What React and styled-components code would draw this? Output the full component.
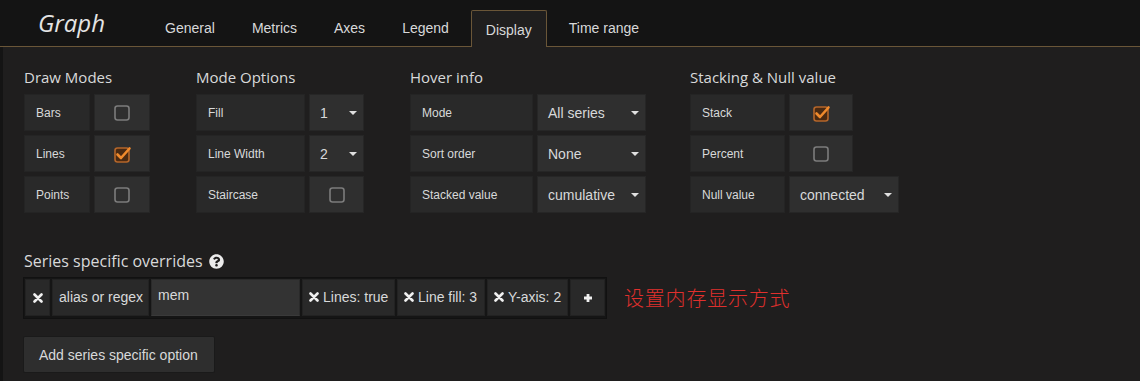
import React from 'react';
import styled, {createGlobalStyle} from 'styled-components';
import {FaQuestionCircle} from 'react-icons/fa';

const GlobalStyle = createGlobalStyle`
    html, body {
        margin: 0;
        padding: 0;
        background: #141414;
    }
    body {
        font-family: "Liberation Sans", Arial, sans-serif;
        color: #d8d9da;
    }
`

const PAGE = styled.div`
    width: 1140px;
    height: 381px;
    overflow: hidden;
    background: #141414;
`

const HEADER = styled.div`
    display: flex;
    align-items: flex-end;
    height: 46px;
    padding-left: 38px;
    border-bottom: 1px solid #6a5638;
`

const TITLE = styled.div`
    align-self: flex-start;
    margin-top: 7px;
    margin-right: 45px;
    font-family: "Open Sans", sans-serif;
    font-style: italic;
    font-size: 24px;
    line-height: 32px;
    color: #e4e4e4;
`

const TAB = styled.div`
    box-sizing: border-box;
    height: ${p => p.active ? '37px' : '36px'};
    margin-right: 7px;
    margin-bottom: ${p => p.active ? '-1px' : '0'};
    padding: ${p => p.active ? '11px 14px 0' : '10px 15px 0'};
    font-size: 14px;
    line-height: 16px;
    color: #d8d9da;
    background: ${p => p.active ? '#1f1e1e' : 'transparent'};
    border: ${p => p.active ? '1px solid #6a5638' : 'none'};
    border-bottom: none;
    border-radius: 2px 2px 0 0;
`

const PANEL = styled.div`
    height: 334px;
    margin-left: 3px;
    padding: 20px 0 0 21px;
    background: #1f1e1e;
`

const SECTIONS = styled.div`
    display: flex;
`

const SECTION = styled.div`
    display: flex;
    flex-direction: column;
    margin-right: ${p => p.gap || 0}px;
`

const HEADING = styled.div`
    font-family: "Open Sans", sans-serif;
    font-size: 15px;
    line-height: 20px;
    color: #d8d9da;
    margin-bottom: 7px;
`

const ROWS = styled.div`
    display: flex;
    flex-direction: column;
    gap: 4px;
`

const ROW = styled.div`
    display: flex;
    gap: 4px;
`

const LABEL = styled.div`
    box-sizing: border-box;
    display: flex;
    align-items: center;
    width: ${p => p.w}px;
    height: 37px;
    padding-left: 11px;
    font-size: 12px;
    color: #d8d9da;
    background: #292929;
    border: 1px solid #242424;
`

const VALUE = styled.div`
    box-sizing: border-box;
    display: flex;
    align-items: center;
    justify-content: ${p => p.center ? 'center' : 'space-between'};
    width: ${p => p.w}px;
    height: 37px;
    padding: ${p => p.center ? '0' : '0 6px 0 10px'};
    font-size: 14px;
    color: #d8d9da;
    background: #2f2f2f;
    border: 1px solid #262626;
`

const CARET = styled.span`
    width: 0;
    height: 0;
    border-left: 4px solid transparent;
    border-right: 4px solid transparent;
    border-top: 4px solid #e0e0e0;
    margin-top: 1px;
`

const OVERRIDE_HEADING = styled.div`
    display: flex;
    align-items: center;
    gap: 6px;
    margin-top: 37px;
    margin-bottom: 5px;
    font-family: "Open Sans", sans-serif;
    font-size: 16px;
    line-height: 22px;
    color: #d8d9da;
    svg {
        color: #ececec;
        width: 15px;
        height: 15px;
        margin-top: 1px;
    }
`

const OVERRIDE_LINE = styled.div`
    display: flex;
    align-items: center;
    margin-left: -1px;
`

const OVERRIDES = styled.div`
    display: flex;
    gap: 2px;
    padding: 1px 1px 2px 1px;
    background: #151515;
    border: 1px solid #111;
`

const OCELL = styled.div`
    box-sizing: border-box;
    display: flex;
    align-items: center;
    justify-content: ${p => p.center ? 'center' : 'flex-start'};
    gap: 4px;
    width: ${p => p.w}px;
    height: 37px;
    padding: ${p => p.center ? '0' : '0 0 1px 6px'};
    font-size: 14px;
    color: #d8d9da;
    background: #292929;
    border: 1px solid #222;
`

const INPUT = styled.div`
    box-sizing: border-box;
    width: 149px;
    height: 37px;
    padding: 7px 0 0 6px;
    font-size: 14px;
    color: #d8d9da;
    background: #333;
    border: 1px solid #2a2a2a;
    border-bottom-color: #3a3a3a;
`

const NOTE = styled.div`
    margin-left: 17px;
    margin-bottom: 2px;
    font-family: "Noto Sans CJK SC", sans-serif;
    font-weight: 300;
    font-size: 20px;
    letter-spacing: 0.8px;
    color: #e0302d;
`

const BUTTON = styled.div`
    box-sizing: border-box;
    display: inline-flex;
    align-items: center;
    height: 37px;
    margin-top: 17px;
    margin-left: -1px;
    padding: 0 15px;
    width: 192px;
    font-size: 14px;
    color: #d8d9da;
    background: #2e2e2e;
    border: 1px solid #1a1a1a;
    border-radius: 2px;
`

const CheckBox = ({checked}) => (
    <svg width="20" height="20" viewBox="0 0 20 20">
        {checked ? (
            <>
                <rect x="3" y="4" width="14" height="14" rx="2.5" fill="#4a2a12" stroke="#b5662a" strokeWidth="1.6"/>
                <path d="M5.5 10.5 L9 14 L17.5 4.5" fill="none" stroke="#f08a2c" strokeWidth="2.6" strokeLinecap="round" strokeLinejoin="round"/>
            </>
        ) : (
            <rect x="3" y="3" width="14" height="14" rx="2.5" fill="none" stroke="#7c7c7c" strokeWidth="1.6"/>
        )}
    </svg>
)

const Remove = () => (
    <svg width="10" height="10" viewBox="0 0 10 10">
        <path d="M1.5 1.5 L8.5 8.5 M8.5 1.5 L1.5 8.5" stroke="#f0f0f0" strokeWidth="2.6" strokeLinecap="round"/>
    </svg>
)

const Plus = () => (
    <svg width="10" height="10" viewBox="0 0 10 10">
        <path d="M5 1 V9 M1 5 H9" stroke="#f0f0f0" strokeWidth="2.8"/>
    </svg>
)

const Select = ({w, value}) => (
    <VALUE w={w}>
        <span>{value}</span>
        <CARET/>
    </VALUE>
)

const Check = ({w, checked}) => (
    <VALUE w={w} center>
        <CheckBox checked={checked}/>
    </VALUE>
)

const App = () => {
    const tabs = ['General', 'Metrics', 'Axes', 'Legend', 'Display', 'Time range'];
    return (
        <PAGE>
            <GlobalStyle/>
            <HEADER>
                <TITLE>Graph</TITLE>
                {tabs.map(t => <TAB key={t} active={t === 'Display'}>{t}</TAB>)}
            </HEADER>
            <PANEL>
                <SECTIONS>
                    <SECTION gap={46}>
                        <HEADING>Draw Modes</HEADING>
                        <ROWS>
                            <ROW><LABEL w={66}>Bars</LABEL><Check w={56}/></ROW>
                            <ROW><LABEL w={66}>Lines</LABEL><Check w={56} checked/></ROW>
                            <ROW><LABEL w={66}>Points</LABEL><Check w={56}/></ROW>
                        </ROWS>
                    </SECTION>
                    <SECTION gap={46}>
                        <HEADING>Mode Options</HEADING>
                        <ROWS>
                            <ROW><LABEL w={109}>Fill</LABEL><Select w={55} value="1"/></ROW>
                            <ROW><LABEL w={109}>Line Width</LABEL><Select w={55} value="2"/></ROW>
                            <ROW><LABEL w={109}>Staircase</LABEL><Check w={55}/></ROW>
                        </ROWS>
                    </SECTION>
                    <SECTION gap={44}>
                        <HEADING>Hover info</HEADING>
                        <ROWS>
                            <ROW><LABEL w={123}>Mode</LABEL><Select w={109} value="All series"/></ROW>
                            <ROW><LABEL w={123}>Sort order</LABEL><Select w={109} value="None"/></ROW>
                            <ROW><LABEL w={123}>Stacked value</LABEL><Select w={109} value="cumulative"/></ROW>
                        </ROWS>
                    </SECTION>
                    <SECTION>
                        <HEADING>Stacking &amp; Null value</HEADING>
                        <ROWS>
                            <ROW><LABEL w={95}>Stack</LABEL><Check w={64} checked/></ROW>
                            <ROW><LABEL w={95}>Percent</LABEL><Check w={64}/></ROW>
                            <ROW><LABEL w={95}>Null value</LABEL><Select w={110} value="connected"/></ROW>
                        </ROWS>
                    </SECTION>
                </SECTIONS>

                <OVERRIDE_HEADING>Series specific overrides <FaQuestionCircle/></OVERRIDE_HEADING>
                <OVERRIDE_LINE>
                    <OVERRIDES>
                        <OCELL w={25} center><Remove/></OCELL>
                        <OCELL w={97}>alias or regex</OCELL>
                        <INPUT>mem</INPUT>
                        <OCELL w={93}><Remove/>Lines: true</OCELL>
                        <OCELL w={88}><Remove/>Line fill: 3</OCELL>
                        <OCELL w={81}><Remove/>Y-axis: 2</OCELL>
                        <OCELL w={35} center><Plus/></OCELL>
                    </OVERRIDES>
                    <NOTE>设置内存显示方式</NOTE>
                </OVERRIDE_LINE>
                <BUTTON>Add series specific option</BUTTON>
            </PANEL>
        </PAGE>
    );
};

export default App;
